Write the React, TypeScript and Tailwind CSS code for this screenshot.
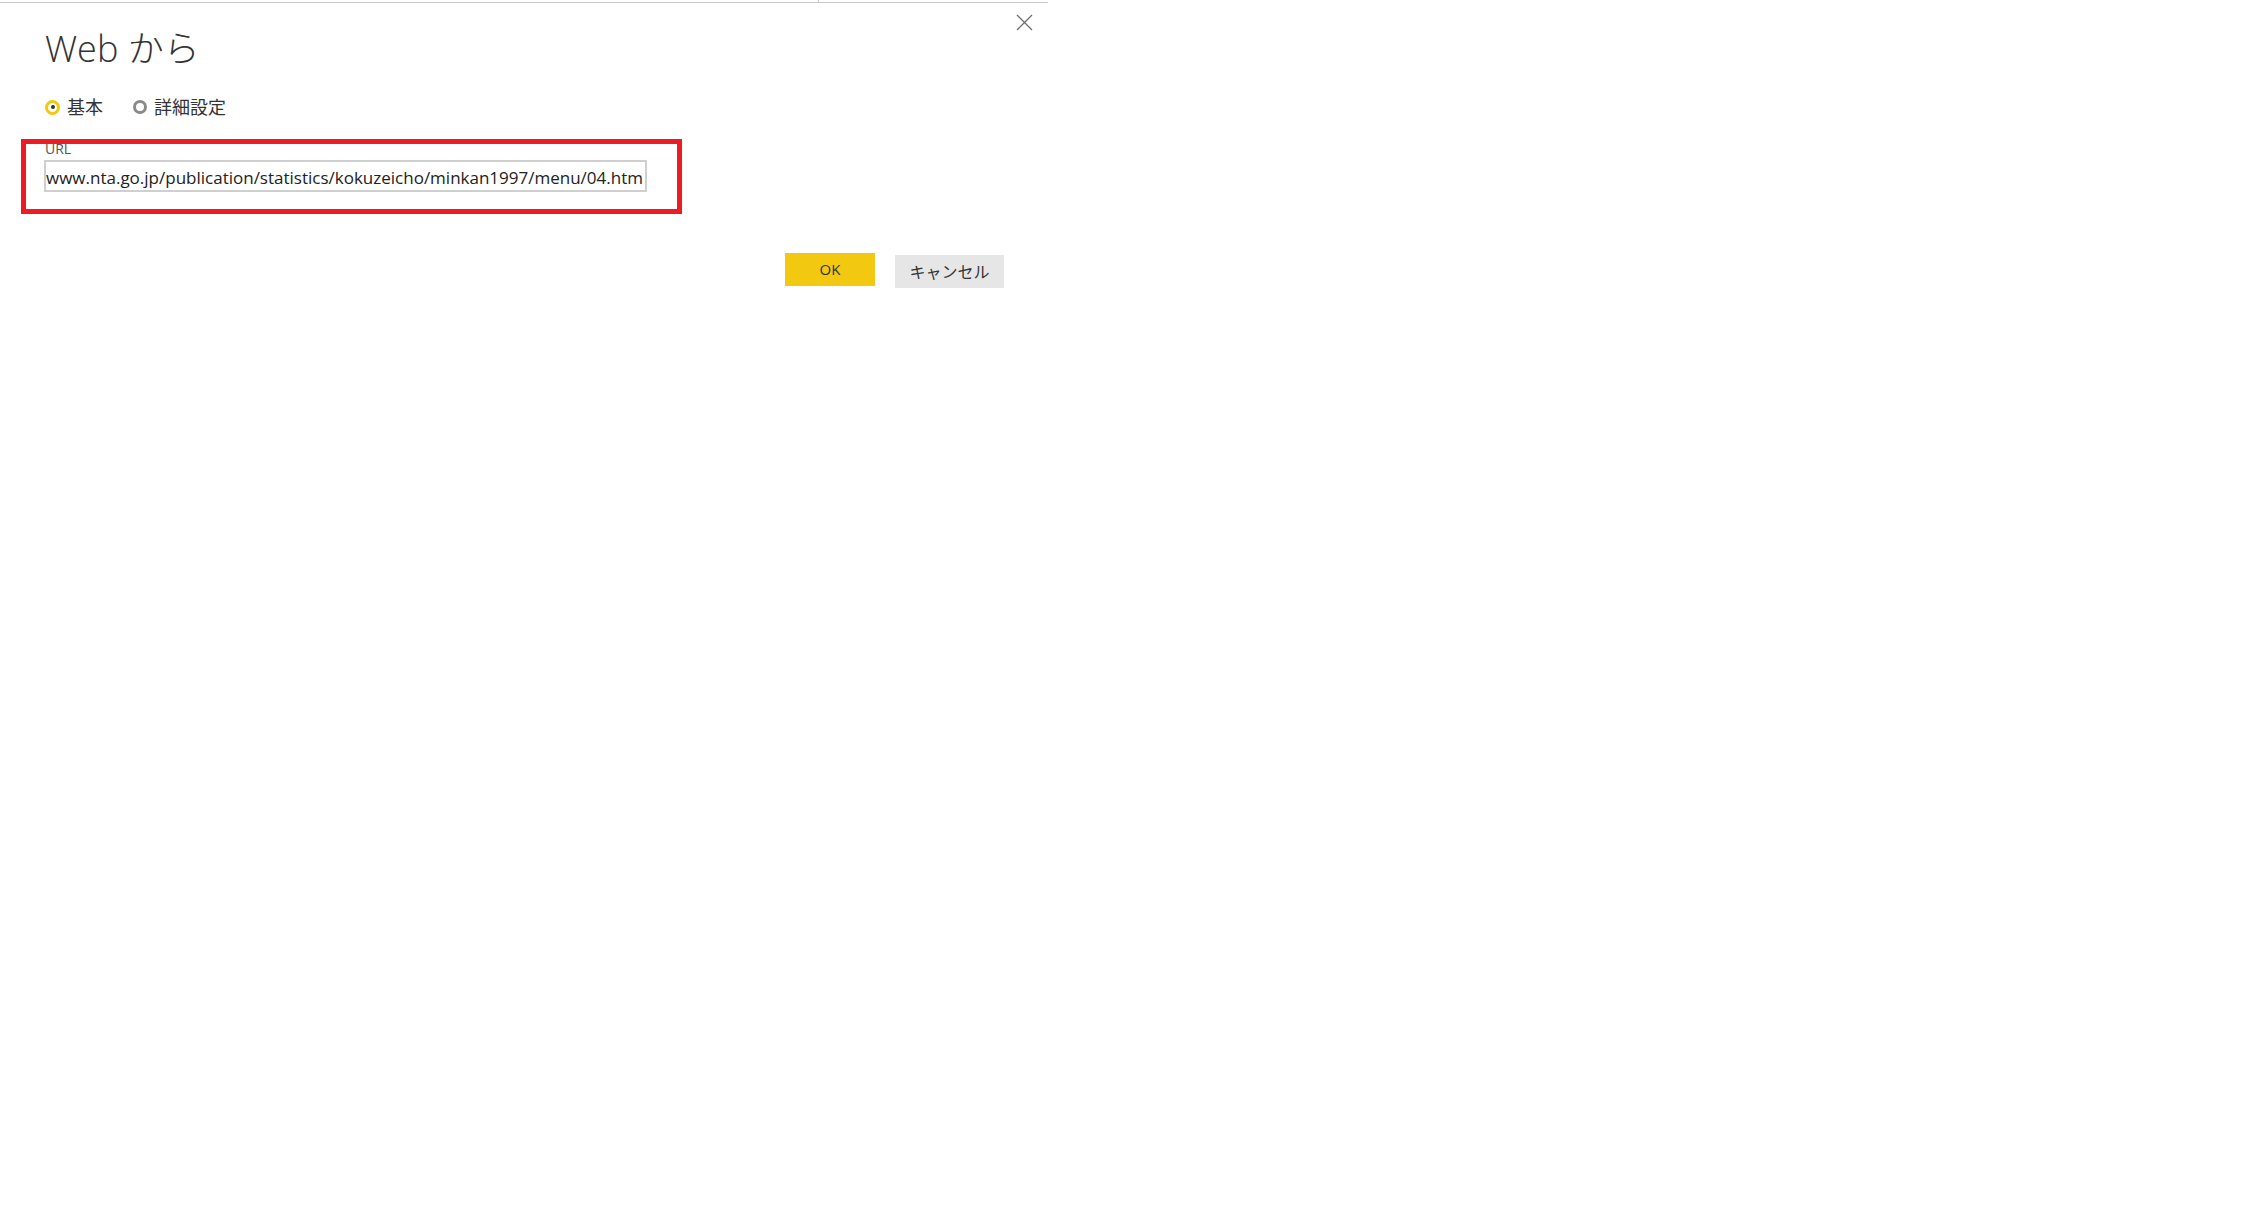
import React from 'react'

const body = '"Open Sans", "Noto Sans CJK JP", sans-serif'

function Radio({ checked, label }: { checked?: boolean; label: string }) {
  return (
    <label className="flex items-center gap-[7px] cursor-pointer">
      {checked ? (
        <span className="flex h-[15px] w-[15px] items-center justify-center rounded-full border-[3px] border-[#F2C811] bg-white">
          <span className="h-[4px] w-[4px] rounded-full bg-[#333]" />
        </span>
      ) : (
        <span className="h-[14px] w-[14px] rounded-full border-[3px] border-[#8a8a8a] bg-white" />
      )}
      <span className="text-[18px] leading-[24px] text-[#333]">{label}</span>
    </label>
  )
}

export default function App() {
  return (
    <div className="h-[1229px] w-full bg-white" style={{ fontFamily: body }}>
      <div className="w-[1048px]">
        {/* top edge of the window behind */}
        <div className="relative mt-[2px] h-px bg-[#c8c8c8]">
          <div className="absolute -top-[2px] left-[818px] h-[3px] w-px bg-[#c8c8c8]" />
        </div>

        <div className="flex items-start justify-between pl-[45px] pr-[15px]">
          <h1 className="mt-[22px] text-[36px] font-light leading-[48px] text-[#333]">Web から</h1>
          <button aria-label="閉じる" className="mt-[11px] p-0">
            <svg width="17" height="17" viewBox="0 0 17 17" fill="none">
              <path d="M1 1L16 16M16 1L1 16" stroke="#6a6a6a" strokeWidth="1.2" />
            </svg>
          </button>
        </div>

        <div className="mt-[22px] flex items-center gap-[30px] pl-[45px]">
          <Radio checked label="基本" />
          <Radio label="詳細設定" />
        </div>

        <div className="ml-[21px] mt-[20px] h-[75px] w-[661px] border-[5px] border-[#ED1C24] pl-[18px]">
          <div className="-mt-[2px] ml-[1px] h-[14px] text-[14px] leading-[14px] text-[#555]">URL</div>
          <div className="mt-[4px] flex h-[32px] w-[603px] items-center overflow-hidden whitespace-nowrap border-2 border-[#cfcfcf] pt-[4px] text-[17px] text-[#222]">
            www.nta.go.jp/publication/statistics/kokuzeicho/minkan1997/menu/04.htm
          </div>
        </div>

        <div className="mt-[39px] flex items-start justify-end gap-[20px] pr-[44px]">
          <button className="h-[33px] w-[90px] bg-[#F2C811] text-[15px] text-[#333]">OK</button>
          <button className="mt-[2px] h-[33px] w-[109px] bg-[#e6e6e6] text-[16px] text-[#333]">キャンセル</button>
        </div>
      </div>
    </div>
  )
}
